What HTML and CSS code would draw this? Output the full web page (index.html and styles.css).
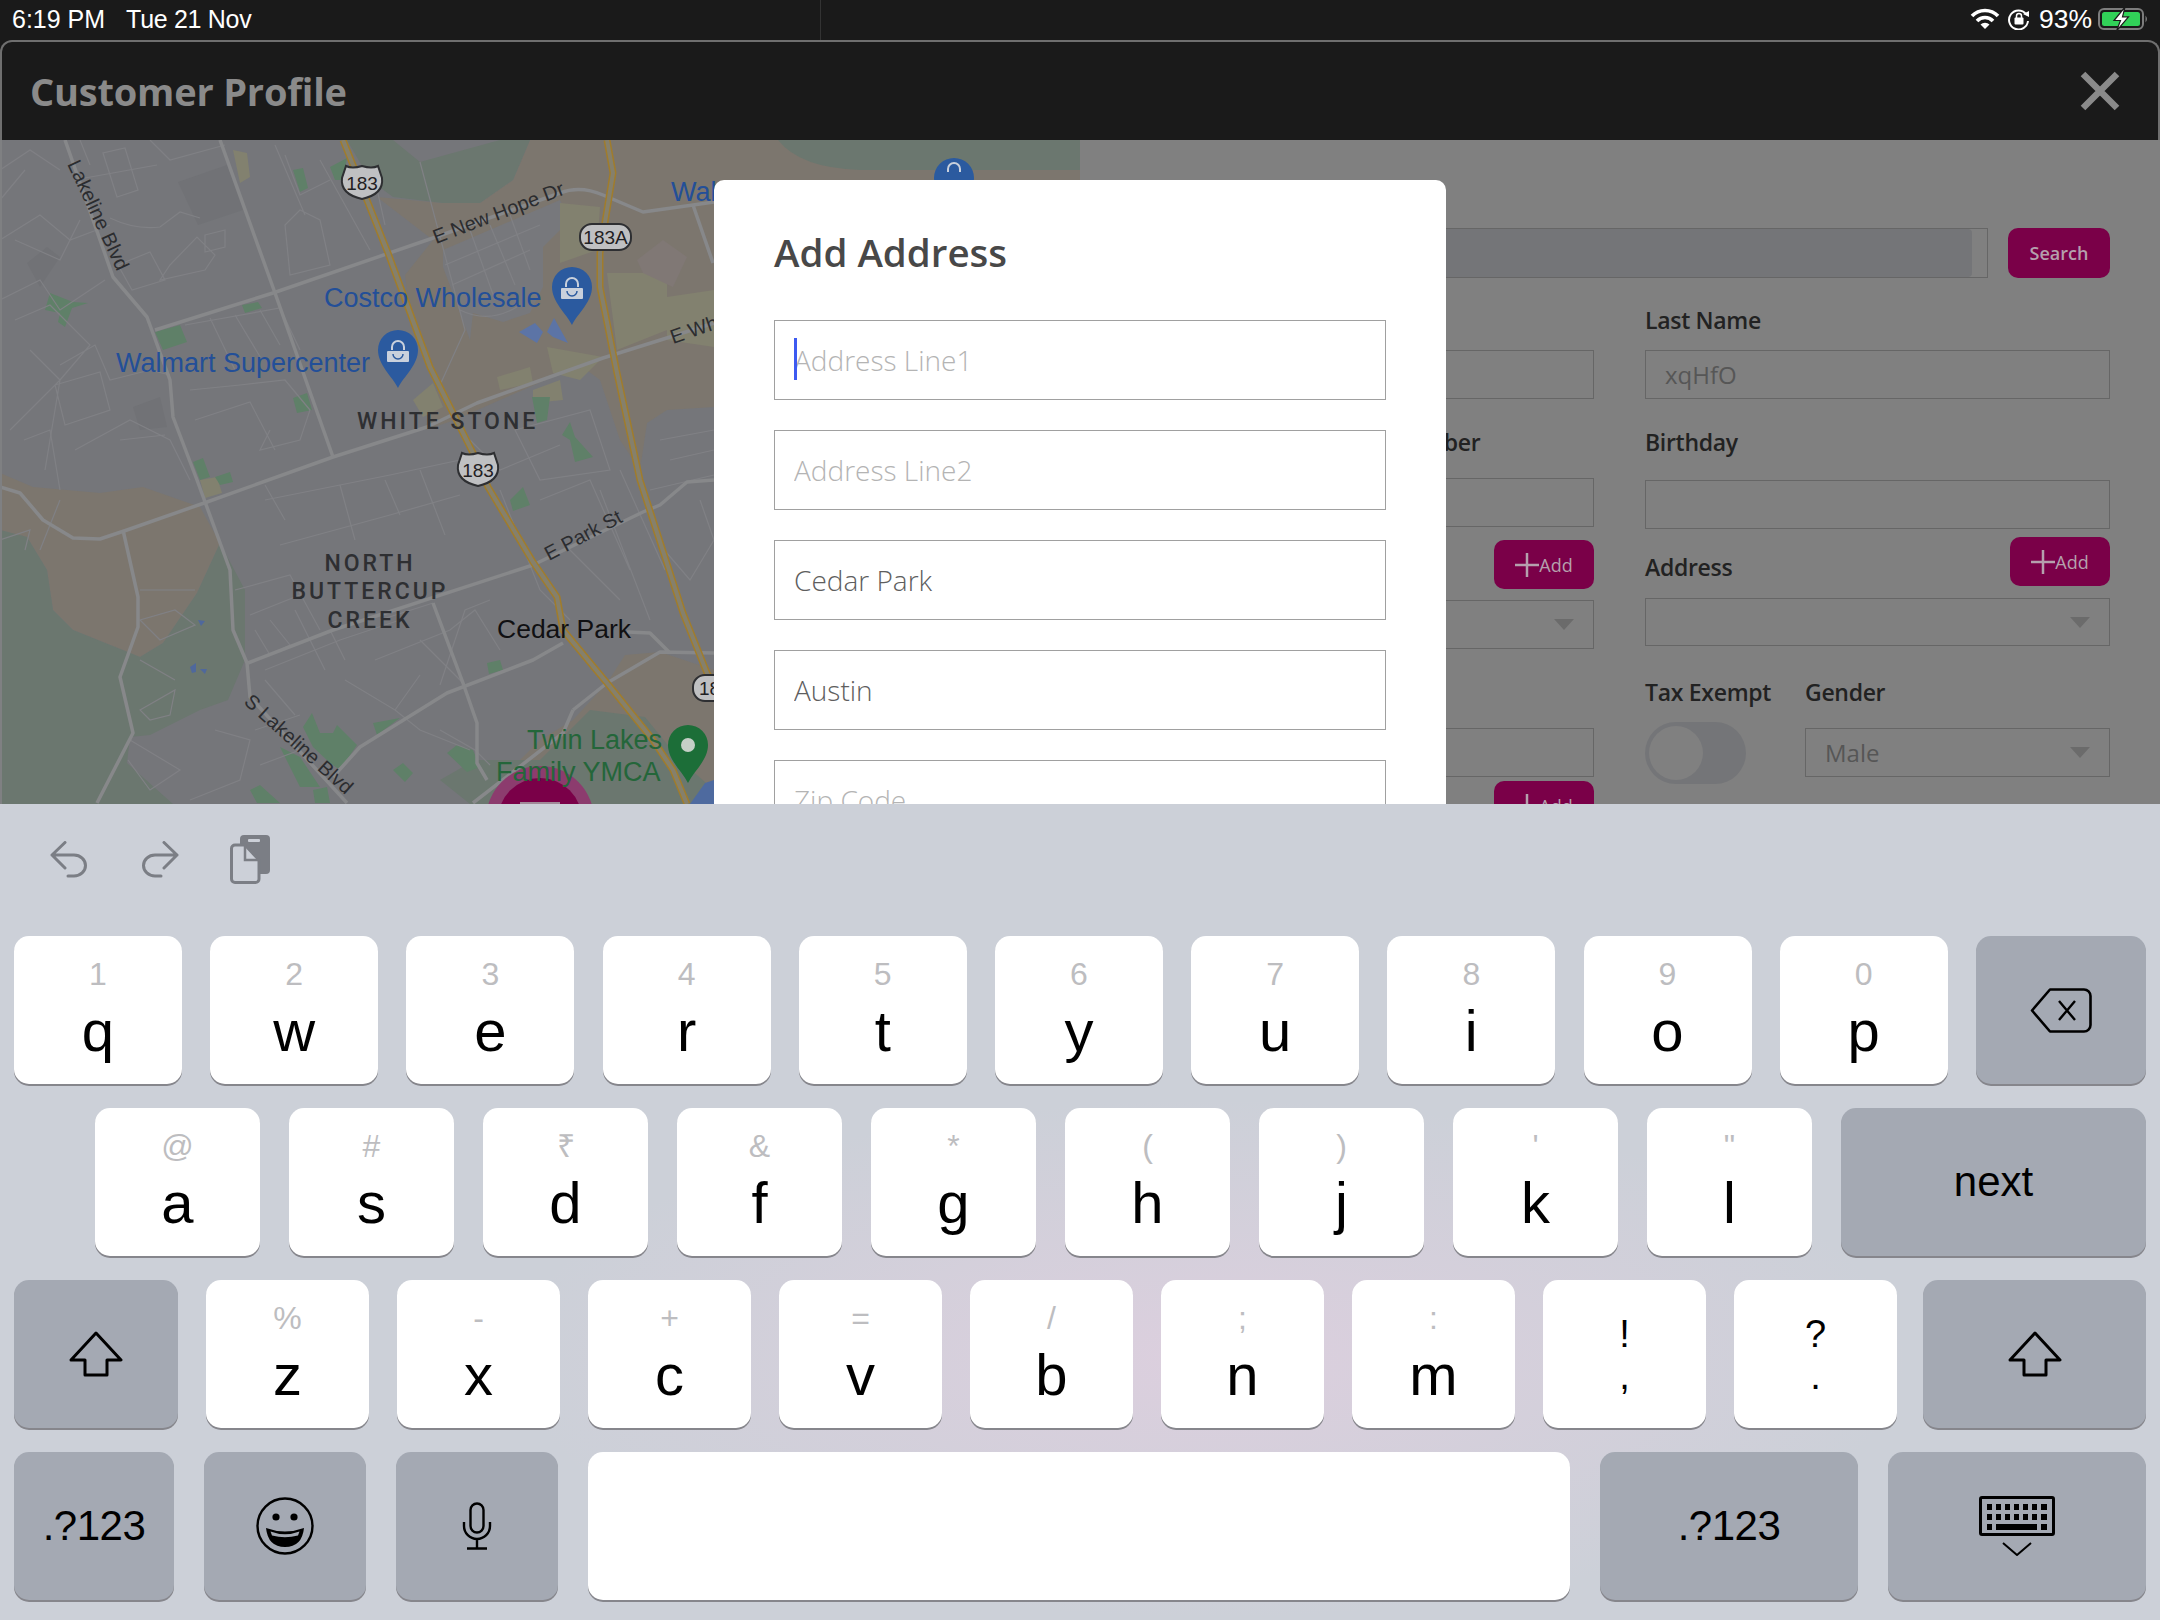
FILE: index.html
```html
<!DOCTYPE html>
<html lang="en">
<head>
    <meta charset="UTF-8">
    <title>Customer Profile</title>
    <link rel="stylesheet" href="styles.css">
</head>
<body>

    <!-- Status bar -->
    <div class="status-bar">
        <div class="status-left"><span>6:19 PM</span><span>Tue 21 Nov</span></div>
        <div class="status-divider"></div>
        <div class="status-right">
            <svg class="icon-wifi" viewBox="0 0 30 22"><path d="M2 8 A18 18 0 0 1 28 8" fill="none" stroke="#fff" stroke-width="3.600"/><path d="M7 13 A11 11 0 0 1 23 13" fill="none" stroke="#fff" stroke-width="3.600"/><path d="M15 21 L10.500 16.500 A6.500 6.500 0 0 1 19.500 16.500 Z" fill="#fff"/></svg>
            <svg class="icon-lock" viewBox="0 0 22 22"><path d="M18 6 A9.500 9.500 0 1 0 20 13" fill="none" stroke="#fff" stroke-width="2"/><path d="M15 6 L21 3 L21 9 Z" fill="#fff"/><rect x="6.500" y="9.500" width="9" height="7" rx="1" fill="#fff"/><path d="M8.500 10 V8 A2.500 2.500 0 0 1 13.500 8 V10" fill="none" stroke="#fff" stroke-width="1.500"/></svg>
            <span class="battery-text">93%</span>
            <svg class="icon-battery" viewBox="0 0 52 24"><rect x="1" y="2" width="44" height="20" rx="5" fill="none" stroke="#7d7d7d" stroke-width="2"/><rect x="4" y="5" width="38" height="14" rx="2.500" fill="#31d158"/><path d="M47.500 8.500 Q50.500 12 47.500 15.500 Z" fill="#7d7d7d"/><path d="M27 0 L16 13.500 H22.500 L18.500 24 L30.500 9.800 H24.500 Z" fill="#fff" stroke="#1a1a1a" stroke-width="1.200"/></svg>
        </div>
    </div>

    <!-- App area above the keyboard -->
    <div class="app">
        <div class="app-header">
            <h1>Customer Profile</h1>
            <svg class="icon-close" viewBox="0 0 40 40"><path d="M3 3 L37 37 M37 3 L3 37" stroke="#8a8a8a" stroke-width="6.500" fill="none"/></svg>
        </div>

        <div class="app-body">
            <!-- Map -->
            <div class="map">
                <svg class="map-svg" viewBox="0 0 1080 664">
                    <rect width="1080" height="664" fill="#75767a"/>

                    <!-- land areas -->
                    <path class="land-tan" d="M377 57 L443 63 L480 63 L513 40 L530 0 H1080 V60 H714 V267 L667 270 L647 283 L640 330 L620 300 L600 240 L580 225 L500 260 L455 280 L425 290 L440 240 L410 175 L405 135 L433 100 Z"/>
                    <path class="land-green" d="M347 0 H530 L513 40 L480 63 L443 63 L393 57 L370 40 Z"/>
                    <path d="M393 0 L420 22 L500 0 Z" fill="#75767a"/>
                    <path class="land-green" d="M778 0 H1080 V30 H860 Q800 28 778 0 Z"/>
                    <path d="M443 110 L560 60 L570 80 L543 107 L543 147 L530 173 L503 182 L473 173 L470 200 L443 127 Z" fill="#77787c"/>
                    <path class="land-yellow" d="M560 63 L600 67 L597 110 L560 123 Z M607 133 L667 133 L667 190 L617 210 Z M667 157 L714 150 V207 L667 200 Z M547 207 L603 217 L580 240 L553 233 Z M497 237 L530 227 L533 243 L500 250 Z M533 250 L560 240 L563 260 L533 263 Z M413 260 L433 243 L443 267 L423 277 Z M233 10 L247 13 L250 37 L240 43 Z M200 340 L217 337 L222 353 L205 358 Z"/>
                    <path d="M637 120 L663 100 L687 117 L673 147 L643 133 Z" fill="#807875"/>
                    <path class="land-tan" d="M0 333 L33 347 L100 353 L143 347 L200 367 L220 403 L197 453 L163 503 L140 517 L73 490 L53 470 L47 430 L27 397 L0 390 Z"/>
                    <path class="land-green" d="M0 390 L27 397 L47 430 L53 470 L73 490 L140 517 L163 503 L197 453 L220 403 L245 450 L245 520 L228 560 L200 570 L150 595 L130 597 L127 623 L173 664 H0 Z"/>
                    <path class="land-tan" d="M573 580 L607 543 L625 515 L660 512 L714 530 V664 H560 L520 620 L540 600 Z"/>
                    <path class="land-green" d="M590 570 L645 577 L680 620 L714 650 V664 H470 L440 640 L475 620 L540 620 Z"/>
                    <path d="M705 643 L714 640 V664 H690 Z" fill="#4e6a9f"/>

                    <!-- darker blocks -->
                    <path d="M178 42 L227 25 L243 70 L198 85 Z M27 123 L47 107 L60 117 L40 147 Z M133 267 L160 257 L167 287 L140 290 Z" fill="#717276"/>

                    <!-- parks -->
                    <path class="land-park" d="M45 170 L50 153 L73 162 L88 163 L72 168 L65 187 L58 182 L60 173 Z"/>
                    <path class="land-park" d="M155 192 L180 185 L187 202 L163 210 Z M242 165 L258 162 L262 168 L245 173 Z M293 30 L303 28 L308 48 L300 52 Z M330 27 L347 18 L343 40 L335 40 Z"/>
                    <path class="land-park" d="M293 258 L307 253 L312 270 L297 273 Z M193 322 L203 318 L210 337 L200 340 Z M215 337 L230 332 L233 342 L220 345 Z"/>
                    <path class="land-park" d="M532 257 L550 257 L547 280 L537 283 Z M570 282 L575 297 L593 317 L575 322 L570 300 L562 295 Z M523 347 L530 365 L513 371 L510 360 Z M487 523 L500 520 L503 530 L489 534 Z"/>
                    <path class="land-park" d="M447 613 L457 605 L473 610 L480 627 L467 632 Z M393 630 L403 623 L413 633 L405 642 Z M373 583 L400 578 L377 595 Z"/>
                    <path class="land-park" d="M303 587 L312 573 L320 593 L333 593 L337 585 L357 605 L340 630 L330 623 L313 607 Z M280 607 L300 617 L320 647 L300 647 Z M250 650 L260 645 L280 663 L257 663 Z M313 650 L327 647 L330 663 L315 663 Z"/>

                    <!-- minor streets -->
                    <path class="street" d="M103 13 L117 57 L138 50 L125 8 Z M85 38 L157 25 M0 30 L30 10 L60 30 M110 78 Q135 90 160 87 L180 72 L200 78 M170 125 L197 97 L215 115 L205 130 L160 140 Z M205 95 L225 90 L225 107 L205 112 Z M118 125 L150 112 L165 140 L132 150 Z"/>
                    <path class="street" d="M0 100 L40 75 L70 100 L110 85 M0 160 L40 140 L60 170 L105 140 M15 180 L50 165 L90 205 L60 240 L30 210 M60 225 L95 205 L110 240 L150 230 L170 235 M55 245 L100 232 L110 270 L65 285 Z M10 290 L60 240 L45 330 M75 310 L130 280 L170 300 L190 340 M120 300 L165 295"/>
                    <path class="street" d="M185 185 L280 168 L300 210 M210 178 L235 230 M235 175 L262 220 M260 170 L280 205 M190 250 L240 245 L285 240 L310 270 L300 300 L260 310 L270 290 M195 280 L250 262 L275 310 M285 85 L300 70 L320 80 L330 125 L290 135 Z M285 15 L300 55 L330 40 M275 5 L305 75 M320 20 L370 110 M345 50 L375 40 L385 85"/>
                    <path class="street" d="M445 125 L540 85 M452 145 L530 110 M470 90 L495 160 M490 85 L515 145 M510 75 L530 130 M460 170 Q490 185 520 165 M420 22 L465 190 L440 245 M80 0 L90 25 M150 0 L170 20 L225 5"/>
                    <path class="street" d="M265 360 L390 335 L460 320 M280 405 L390 375 L460 355 M265 345 L285 380 M340 345 L355 400 M385 340 L400 375 M420 330 L445 395 M460 320 L470 340"/>
                    <path class="street" d="M235 450 L290 435 L320 490 M250 475 L300 455 M255 490 L270 515 L290 505 L270 480 M295 470 L325 530 M330 490 L345 520 M380 480 L433 463 M375 520 L450 490 L475 470 L500 510"/>
                    <path class="street" d="M265 530 L340 500 L400 480 M265 540 L295 575 M345 540 L395 570 L420 535 M395 570 L420 590 L470 610 M420 500 L465 545 M440 545 L465 470 L490 460"/>
                    <path class="street" d="M130 600 L180 630 L150 650 L128 620 M175 540 L140 520 M140 570 L175 550 L170 575 L150 580 Z M215 590 L250 600 L240 640 L190 660 M255 590 L300 575 M260 625 L300 610 M440 590 L475 610 L490 625"/>
                    <path class="street" d="M540 360 L590 340 L630 430 M560 400 L620 460 M500 350 L540 450 L570 480 M600 350 L650 480 M620 330 L665 430 M700 360 L714 400 L690 440 L660 405 M660 300 L714 290 M670 320 L714 310 M650 350 L714 335"/>
                    <path class="street" d="M515 290 L590 270 L610 330 L540 340 Z M470 300 L500 330 L560 305 M25 30 L0 60 M15 100 L60 120 L80 80"/>
                    <path class="street" d="M24 300 L50 290 L60 350 M0 400 L30 390 L25 410 M60 360 L40 410 M160 500 L195 485 L175 470 L140 480 Z M140 450 L195 450"/>

                    <!-- main roads -->
                    <g class="road">
                        <path d="M65 0 L113 137 L147 177 L170 240 L173 277 L197 340 L230 430 L233 490 L247 523 L250 557 L347 663"/>
                        <path d="M155 190 L273 153 L433 98 L560 53 Q580 45 603 55 L643 72 L693 65 L714 62 M693 65 L713 123"/>
                        <path d="M220 0 L275 153 L333 317"/>
                        <path d="M0 347 L20 353 L43 380 L73 398 L100 399 L127 390 L207 362 L333 317 L427 287 L477 263 L603 218 L670 197 L714 183"/>
                        <path d="M123 390 L138 457 L138 487 L120 537 L133 593 L97 663"/>
                        <path d="M248 523 L333 490 L533 425 L643 372 L660 365 L687 342 L714 340"/>
                        <path d="M333 637 L360 607 L447 553 L533 520 L563 503 M573 570 L607 543 L660 512 L714 513 M627 492 L650 493 L670 513"/>
                        <path d="M433 463 L463 543 L477 583 L477 623 L487 640"/>
                        <path d="M573 570 L563 593 L473 663"/>
                    </g>

                    <!-- highways -->
                    <g class="highway-edge">
                        <path d="M343 0 L388 113 L430 227 L473 313 L488 347 L533 422 L557 457 L563 490 L607 543 L653 600 L673 630 L687 664"/>
                        <path d="M607 0 L613 33 L600 113 L600 147 L617 233 L640 340 L683 473 L707 533 L714 545"/>
                    </g>
                    <g class="highway-fill">
                        <path d="M343 0 L388 113 L430 227 L473 313 L488 347 L533 422 L557 457 L563 490 L607 543 L653 600 L673 630 L687 664"/>
                        <path d="M607 0 L613 33 L600 113 L600 147 L617 233 L640 340 L683 473 L707 533 L714 545"/>
                    </g>

                    <!-- small water shapes -->
                    <path d="M519 192 L535 183 L543 192 L537 203 Z M547 192 L554 178 L568 203 L553 197 Z" fill="#5c74a6"/>
                    <path d="M198 480 L205 481 L201 486 Z M190 527 L196 523 L196 532 L192 533 Z M200 529 L207 529 L205 534 Z" fill="#4f689c"/>

                    <!-- shields -->
                    <g class="shield">
                        <path d="M346 26 Q352 29 362 26 Q372 29 378 26 L382 38 Q384 54 362 59 Q340 54 342 38 Z"/>
                        <text x="362" y="50" text-anchor="middle">183</text>
                        <path d="M462 313 Q468 316 478 313 Q488 316 494 313 L498 325 Q500 341 478 346 Q456 341 458 325 Z"/>
                        <text x="478" y="337" text-anchor="middle">183</text>
                        <rect x="580" y="84" width="51" height="26" rx="12"/>
                        <text x="605.500" y="104" text-anchor="middle">183A</text>
                        <rect x="693" y="535" width="52" height="26" rx="12"/>
                        <text x="699" y="555">183</text>
                    </g>

                    <!-- pins -->
                    <g class="pin">
                        <path d="M572 127 A20 20 0 0 1 592 147 C592 162 578 173 572 185 C566 173 552 162 552 147 A20 20 0 0 1 572 127 Z"/>
                        <rect class="pin-bag" x="561" y="148" width="22" height="11" rx="1"/>
                        <path class="pin-line" d="M566 147 V144 A6 6 0 0 1 578 144 V147"/>
                        <path class="pin-smile" d="M567 151 A5 5 0 0 0 577 151"/>
                        <path d="M398 190 A20 20 0 0 1 418 210 C418 225 404 236 398 248 C392 236 378 225 378 210 A20 20 0 0 1 398 190 Z"/>
                        <rect class="pin-bag" x="387" y="211" width="22" height="11" rx="1"/>
                        <path class="pin-line" d="M392 210 V207 A6 6 0 0 1 404 207 V210"/>
                        <path class="pin-smile" d="M393 214 A5 5 0 0 0 403 214"/>
                        <path d="M954 18 A20 20 0 0 1 974 38 C974 53 960 64 954 76 C948 64 934 53 934 38 A20 20 0 0 1 954 18 Z"/>
                        <path class="pin-line" d="M948 32 V29 A6 6 0 0 1 960 29 V32"/>
                        <path class="pin-green" d="M688 585 A20 20 0 0 1 708 605 C708 620 694 631 688 643 C682 631 668 620 668 605 A20 20 0 0 1 688 585 Z"/>
                        <circle cx="688" cy="605" r="7" fill="#c5cfc7"/>
                    </g>

                    <!-- round action button -->
                    <circle cx="540" cy="680" r="54" fill="#8c3c6e"/>
                    <circle cx="540" cy="680" r="42" fill="#7a0048"/>
                    <rect x="520" y="662" width="40" height="5" fill="#a08a98"/>

                    <!-- labels -->
                    <text class="map-road" transform="translate(67 24) rotate(65)">Lakeline Blvd</text>
                    <text class="map-road" transform="translate(436 104) rotate(-21)">E New Hope Dr</text>
                    <text class="map-road" transform="translate(549 421) rotate(-28)">E Park St</text>
                    <text class="map-road" transform="translate(673 204) rotate(-19)">E Wh</text>
                    <text class="map-road" transform="translate(243 563) rotate(42)">S Lakeline Blvd</text>
                    <text class="map-poi" x="671" y="61">Wal</text>
                    <text class="map-poi" x="324" y="167">Costco Wholesale</text>
                    <text class="map-poi" x="116" y="232">Walmart Supercenter</text>
                    <text class="map-area" x="357" y="289">WHITE STONE</text>
                    <text class="map-area" x="370" y="431" text-anchor="middle">NORTH</text>
                    <text class="map-area" x="370" y="459" text-anchor="middle">BUTTERCUP</text>
                    <text class="map-area" x="370" y="488" text-anchor="middle">CREEK</text>
                    <text class="map-city" x="497" y="498">Cedar Park</text>
                    <text class="map-green" x="527" y="609">Twin Lakes</text>
                    <text class="map-green" x="496" y="641">Family YMCA</text>

                    <rect width="2" height="664" fill="#7f8082"/>
                </svg>
            </div>

            <!-- Profile form, dimmed by the modal -->
            <div class="panel">
                <div class="search-row">
                    <div class="search-input"><div class="search-fill"></div></div>
                    <button class="btn-search">Search</button>
                </div>
                <div class="form-columns">
                    <div class="form-col">
                        <label class="field-label">First Name</label>
                        <div class="field-box box-first"></div>
                        <label class="field-label label-number">Number</label>
                        <div class="field-box box-number"></div>
                        <div class="add-row add-row-left"><button class="btn-add"><svg viewBox="0 0 24 24"><path d="M12 0 V24 M0 12 H24" stroke="#b5a0ad" stroke-width="2.500"/></svg>Add</button></div>
                        <div class="field-box select-left"><span class="caret"></span></div>
                        <div class="field-box box-bottom"></div>
                        <div class="add-row add-row-bottom"><button class="btn-add"><svg viewBox="0 0 24 24"><path d="M12 0 V24 M0 12 H24" stroke="#b5a0ad" stroke-width="2.500"/></svg>Add</button></div>
                    </div>
                    <div class="form-col">
                        <label class="field-label">Last Name</label>
                        <div class="field-box box-first">xqHfO</div>
                        <label class="field-label">Birthday</label>
                        <div class="field-box box-birthday"></div>
                        <div class="add-row add-row-right">
                            <label class="field-label label-address">Address</label>
                            <button class="btn-add"><svg viewBox="0 0 24 24"><path d="M12 0 V24 M0 12 H24" stroke="#b5a0ad" stroke-width="2.500"/></svg>Add</button>
                        </div>
                        <div class="field-box select-right"><span class="caret"></span></div>
                        <div class="tax-row">
                            <div class="tax-col">
                                <label class="field-label">Tax Exempt</label>
                                <div class="toggle"><div class="toggle-knob"></div></div>
                            </div>
                            <div class="gender-col">
                                <label class="field-label">Gender</label>
                                <div class="field-box select-gender">Male<span class="caret"></span></div>
                            </div>
                        </div>
                    </div>
                </div>
            </div>
        </div>

        <!-- Add Address modal -->
        <div class="modal">
            <h2>Add Address</h2>
            <div class="modal-field">
                <span class="text-cursor"></span>
                <input type="text" placeholder="Address Line1">
            </div>
            <div class="modal-field"><input type="text" placeholder="Address Line2"></div>
            <div class="modal-field"><input type="text" value="Cedar Park"></div>
            <div class="modal-field"><input type="text" value="Austin"></div>
            <div class="modal-field"><input type="text" placeholder="Zip Code"></div>
        </div>
    </div>

    <!-- On-screen keyboard -->
    <div class="keyboard">
        <div class="kb-tools">
            <svg class="tool-undo" viewBox="0 0 38 37"><path d="M15 1.500 L2 14 L15 27 M2 14 H24 A11.500 10.500 0 0 1 24 35 H18" fill="none" stroke="#7b7e85" stroke-width="3" stroke-linecap="round" stroke-linejoin="round"/></svg>
            <svg class="tool-redo" viewBox="0 0 38 37"><path d="M23 1.500 L36 14 L23 27 M36 14 H14 A11.500 10.500 0 0 0 14 35 H20" fill="none" stroke="#7b7e85" stroke-width="3" stroke-linecap="round" stroke-linejoin="round"/></svg>
            <svg class="tool-paste" viewBox="0 0 41 50"><rect x="10" y="1" width="30" height="39" rx="4" fill="#7b7e85"/><rect x="18" y="5" width="12" height="3" rx="1" fill="#ccd0d8"/><path d="M5 11 H15 L29 26 V45 A3.500 3.500 0 0 1 25.500 48.500 H5 A3.500 3.500 0 0 1 1.500 45 V14.500 A3.500 3.500 0 0 1 5 11 Z" fill="#ccd0d8" stroke="#7b7e85" stroke-width="3"/><path d="M15 11 V26 H29" fill="none" stroke="#7b7e85" stroke-width="2.500"/></svg>
        </div>

        <div class="kb-row row-one">
            <div class="key"><span class="hint">1</span><span class="letter">q</span></div>
            <div class="key"><span class="hint">2</span><span class="letter">w</span></div>
            <div class="key"><span class="hint">3</span><span class="letter">e</span></div>
            <div class="key"><span class="hint">4</span><span class="letter">r</span></div>
            <div class="key"><span class="hint">5</span><span class="letter">t</span></div>
            <div class="key"><span class="hint">6</span><span class="letter">y</span></div>
            <div class="key"><span class="hint">7</span><span class="letter">u</span></div>
            <div class="key"><span class="hint">8</span><span class="letter">i</span></div>
            <div class="key"><span class="hint">9</span><span class="letter">o</span></div>
            <div class="key"><span class="hint">0</span><span class="letter">p</span></div>
            <div class="key key-dark key-grow">
                <svg class="icon-backspace" viewBox="0 0 62 45"><path d="M20 1.500 H54 A6.500 6.500 0 0 1 60.500 8 V37 A6.500 6.500 0 0 1 54 43.500 H20 L2 22.500 Z" fill="none" stroke="#000" stroke-width="2.600" stroke-linejoin="round"/><path d="M29 13 L45 32 M45 13 L29 32" stroke="#000" stroke-width="2.400"/></svg>
            </div>
        </div>

        <div class="kb-row row-two">
            <div class="key"><span class="hint">@</span><span class="letter">a</span></div>
            <div class="key"><span class="hint">#</span><span class="letter">s</span></div>
            <div class="key"><span class="hint">₹</span><span class="letter">d</span></div>
            <div class="key"><span class="hint">&amp;</span><span class="letter">f</span></div>
            <div class="key"><span class="hint">*</span><span class="letter">g</span></div>
            <div class="key"><span class="hint">(</span><span class="letter">h</span></div>
            <div class="key"><span class="hint">)</span><span class="letter">j</span></div>
            <div class="key"><span class="hint">'</span><span class="letter">k</span></div>
            <div class="key"><span class="hint">"</span><span class="letter">l</span></div>
            <div class="key key-dark key-grow"><span class="key-word">next</span></div>
        </div>

        <div class="kb-row row-three">
            <div class="key key-dark key-shift">
                <svg class="icon-shift" viewBox="0 0 54 46"><path d="M27 2 L52 29 H38 V44 H16 V29 H2 Z" fill="none" stroke="#000" stroke-width="3" stroke-linejoin="round"/></svg>
            </div>
            <div class="key"><span class="hint">%</span><span class="letter">z</span></div>
            <div class="key"><span class="hint">-</span><span class="letter">x</span></div>
            <div class="key"><span class="hint">+</span><span class="letter">c</span></div>
            <div class="key"><span class="hint">=</span><span class="letter">v</span></div>
            <div class="key"><span class="hint">/</span><span class="letter">b</span></div>
            <div class="key"><span class="hint">;</span><span class="letter">n</span></div>
            <div class="key"><span class="hint">:</span><span class="letter">m</span></div>
            <div class="key key-stack"><span>!</span><span>,</span></div>
            <div class="key key-stack"><span>?</span><span>.</span></div>
            <div class="key key-dark key-grow key-shift-right">
                <svg class="icon-shift" viewBox="0 0 54 46"><path d="M27 2 L52 29 H38 V44 H16 V29 H2 Z" fill="none" stroke="#000" stroke-width="3" stroke-linejoin="round"/></svg>
            </div>
        </div>

        <div class="kb-row row-four">
            <div class="key key-dark key-num-left"><span class="key-num">.?123</span></div>
            <div class="key key-dark key-small">
                <svg class="icon-emoji" viewBox="0 0 58 58"><circle cx="29" cy="29" r="27.500" fill="none" stroke="#000" stroke-width="2.400"/><circle cx="20" cy="20" r="3.600"/><circle cx="38" cy="20" r="3.600"/><path d="M10 31 Q29 38 48 31 Q46 50 29 50 Q12 50 10 31 Z M14.500 34.500 Q29 40 43.500 34.500 L42 38.500 Q29 42 16 38.500 Z" fill-rule="evenodd"/></svg>
            </div>
            <div class="key key-dark key-small">
                <svg class="icon-mic" viewBox="0 0 30 48"><rect x="8.500" y="1.500" width="13" height="29" rx="6.500" fill="none" stroke="#000" stroke-width="2.400"/><path d="M2 20 V24 A13 13 0 0 0 28 24 V20 M15 37 V46 M5 46.500 H25" fill="none" stroke="#000" stroke-width="2.400"/></svg>
            </div>
            <div class="key key-space"></div>
            <div class="key key-dark key-wide"><span class="key-num">.?123</span></div>
            <div class="key key-dark key-wide">
                <svg class="icon-dismiss" viewBox="0 0 76 60"><rect x="1.500" y="1.500" width="73" height="37" rx="1.500" fill="none" stroke="#000" stroke-width="3"/><path d="M8 8 h5 v6 h-5z M17 8 h5 v6 h-5z M26 8 h5 v6 h-5z M35 8 h5 v6 h-5z M44 8 h5 v6 h-5z M53 8 h5 v6 h-5z M62 8 h6 v6 h-6z M8 18 h5 v6 h-5z M17 18 h5 v6 h-5z M26 18 h5 v6 h-5z M35 18 h5 v6 h-5z M44 18 h5 v6 h-5z M53 18 h5 v6 h-5z M62 18 h6 v6 h-6z M8 28 h5 v6 h-5z M17 28 h41 v6 h-41z M62 28 h6 v6 h-6z"/><path d="M24 47 L38 59 L52 47" fill="none" stroke="#000" stroke-width="2"/></svg>
            </div>
        </div>
    </div>

</body>
</html>
```

FILE: styles.css
```css
/* Basic Reset */
* {
    margin: 0;
    padding: 0;
    box-sizing: border-box;
}

body {
    width: 2160px;
    height: 1620px;
    overflow: hidden;
    background-color: #1a1a1a;
    font-family: 'Open Sans', sans-serif;
}

/* Status bar */
.status-bar {
    height: 40px;
    background-color: #1a1a1a;
    color: #fff;
    font-family: 'Liberation Sans', sans-serif;
    font-size: 25px;
    display: flex;
    align-items: center;
    justify-content: space-between;
    position: relative;
    padding: 0 10px 2px 12px;
}

.status-left span + span {
    margin-left: 21px;
    letter-spacing: -0.3px;
}

.status-divider {
    position: absolute;
    left: 820px;
    top: 0;
    width: 1px;
    height: 40px;
    background-color: #333;
}

.status-right {
    display: flex;
    align-items: center;
}

.icon-wifi {
    width: 30px;
    height: 22px;
}

.icon-lock {
    width: 22px;
    height: 22px;
    margin-left: 8px;
}

.battery-text {
    margin-left: 9px;
    font-size: 26.500px;
}

.icon-battery {
    width: 52px;
    height: 24px;
    margin-left: 6px;
}

/* App */
.app {
    height: 764px;
    position: relative;
    overflow: hidden;
}

.app-header {
    height: 100px;
    background-color: #1a1a1a;
    border: 2px solid #6f6f6f;
    border-bottom: none;
    border-radius: 12px 12px 0 0;
    display: flex;
    align-items: center;
    justify-content: space-between;
    padding: 0 38px 0 28px;
}

.app-header h1 {
    font-size: 38px;
    font-weight: 700;
    color: #8a8a8a;
    letter-spacing: -0.2px;
}

.icon-close {
    width: 40px;
    height: 40px;
}

.app-body {
    display: flex;
    height: 664px;
}

/* Map */
.map {
    width: 1080px;
    flex-shrink: 0;
}

.map-svg {
    display: block;
    width: 1080px;
    height: 664px;
    font-family: 'Liberation Sans', sans-serif;
}

.land-tan {
    fill: #7c766e;
}

.land-green {
    fill: #6b776f;
}

.land-yellow {
    fill: #82816f;
}

.land-park {
    fill: #5f8068;
}

.street {
    fill: none;
    stroke: #808185;
    stroke-width: 1.200px;
}

.road {
    fill: none;
    stroke: #87888a;
    stroke-width: 3.500px;
    stroke-linejoin: round;
}

.highway-edge {
    fill: none;
    stroke: #a07c2c;
    stroke-width: 7px;
    stroke-linejoin: round;
}

.highway-fill {
    fill: none;
    stroke: #85806c;
    stroke-width: 4px;
    stroke-linejoin: round;
}

.shield path,
.shield rect {
    fill: #bfc0c2;
    stroke: #2e2f32;
    stroke-width: 2px;
}

.shield text {
    font-size: 19px;
    fill: #1f2023;
}

.pin path {
    fill: #2b5a9f;
}

.pin .pin-green {
    fill: #1c6e38;
}

.pin .pin-bag {
    fill: #c9d0dc;
}

.pin .pin-line {
    fill: none;
    stroke: #c9d0dc;
    stroke-width: 2px;
}

.pin .pin-smile {
    fill: none;
    stroke: #2b5a9f;
    stroke-width: 1.500px;
}

.map-road {
    font-size: 20px;
    fill: #2b2c2f;
}

.map-poi {
    font-size: 27px;
    fill: #234f98;
}

.map-area {
    font-family: Roboto, sans-serif;
    font-size: 23px;
    font-weight: 500;
    letter-spacing: 3px;
    fill: #2e2f32;
}

.map-city {
    font-size: 26.500px;
    fill: #101012;
}

.map-green {
    font-size: 27px;
    fill: #24663a;
}

/* Profile form */
.panel {
    flex: 1;
    background-color: #808080;
    padding: 88px 50px 0 49px;
}

.search-row {
    display: flex;
    gap: 20px;
}

.search-input {
    flex: 1;
    height: 50px;
    border: 1px solid #666;
    background-color: #808080;
    padding-right: 15px;
}

.search-fill {
    height: 100%;
    background-color: #747578;
    border-radius: 0 4px 4px 0;
}

.btn-search {
    width: 102px;
    height: 50px;
    background-color: #7a0048;
    color: #b5a0ad;
    border: none;
    border-radius: 10px;
    font-family: inherit;
    font-size: 18px;
    font-weight: 600;
}

.form-columns {
    display: flex;
    gap: 51px;
    margin-top: 27px;
}

.form-col {
    width: 465px;
    flex-shrink: 0;
}

.field-label {
    display: block;
    height: 30px;
    line-height: 30px;
    font-size: 23px;
    font-weight: 600;
    color: #222;
    letter-spacing: -0.3px;
}

.label-number {
    margin-top: 28px;
    padding-left: 261px;
}

.form-col > .field-label:nth-of-type(2) {
    margin-top: 28px;
}

.field-box {
    border: 1px solid #666;
    padding-left: 19px;
    font-size: 24px;
    color: #565656;
    display: flex;
    align-items: center;
    position: relative;
}

.box-first {
    height: 49px;
    margin-top: 15px;
}

.box-number {
    height: 49px;
    margin-top: 21px;
}

.box-birthday {
    height: 49px;
    margin-top: 23px;
}

.box-bottom {
    height: 49px;
    margin-top: 79px;
}

.select-left {
    height: 49px;
    margin-top: 11px;
}

.select-right {
    height: 48px;
    margin-top: 12px;
}

.select-gender {
    height: 49px;
    margin-top: 21px;
}

.caret {
    position: absolute;
    right: 19px;
    top: 18px;
    border-left: 10px solid transparent;
    border-right: 10px solid transparent;
    border-top: 11px solid #6b6b6b;
}

.add-row {
    display: flex;
    justify-content: flex-end;
}

.add-row-left {
    margin-top: 13px;
}

.add-row-right {
    justify-content: space-between;
    margin-top: 8px;
}

.add-row-bottom {
    margin-top: 4px;
}

.label-address {
    margin-top: 15px;
}

.btn-add {
    width: 100px;
    height: 49px;
    background-color: #7a0048;
    color: #b5a0ad;
    border: none;
    border-radius: 10px;
    font-family: inherit;
    font-size: 18px;
    display: flex;
    align-items: center;
    justify-content: center;
}

.btn-add svg {
    width: 24px;
    height: 24px;
}

.tax-row {
    display: flex;
    margin-top: 31px;
}

.tax-col {
    width: 160px;
}

.gender-col {
    flex: 1;
}

.toggle {
    width: 101px;
    height: 62px;
    margin-top: 15px;
    border-radius: 31px;
    background-color: #747578;
    padding: 4px;
}

.toggle-knob {
    width: 54px;
    height: 54px;
    border-radius: 50%;
    background-color: #808080;
}

/* Modal */
.modal {
    position: absolute;
    left: 714px;
    top: 140px;
    width: 732px;
    height: 700px;
    background-color: #fff;
    border-radius: 10px;
    padding: 0 60px;
}

.modal h2 {
    height: 140px;
    line-height: 144px;
    font-size: 38.500px;
    font-weight: 600;
    color: #484848;
}

.modal-field {
    position: relative;
    margin-bottom: 30px;
}

.modal-field input {
    display: block;
    width: 612px;
    height: 80px;
    border: 1px solid #a0a0a0;
    border-radius: 0;
    padding: 0 19px;
    font-family: 'Open Sans', sans-serif;
    font-size: 28px;
    font-weight: 300;
    color: #5e5e5e;
    outline: none;
}

.modal-field input::placeholder {
    color: #b4b4b4;
    opacity: 1;
}

.text-cursor {
    position: absolute;
    left: 20px;
    top: 18px;
    width: 3px;
    height: 42px;
    background-color: #3d5af1;
}

/* Keyboard */
.keyboard {
    height: 816px;
    background:
        radial-gradient(ellipse 700px 260px at 56% 68%, #dccfde 0, rgba(220, 207, 222, 0) 100%),
        #ccd0d8;
    font-family: 'Liberation Sans', sans-serif;
    color: #000;
}

.kb-tools {
    height: 132px;
    display: flex;
    align-items: flex-start;
    position: relative;
}

.tool-undo,
.tool-redo {
    width: 38px;
    height: 37px;
    margin-top: 37px;
}

.tool-undo {
    margin-left: 50px;
}

.tool-redo {
    margin-left: 53px;
}

.tool-paste {
    width: 41px;
    height: 50px;
    margin-top: 30px;
    margin-left: 51px;
}

.kb-row {
    display: flex;
    height: 148px;
    margin-bottom: 24px;
    padding-right: 14px;
}

.row-one {
    gap: 28.200px;
    padding-left: 14px;
}

.row-two {
    gap: 29px;
    padding-left: 95px;
}

.row-three {
    gap: 28px;
    padding-left: 14px;
}

.row-four {
    gap: 30px;
    padding-left: 14px;
}

.key {
    width: 168px;
    background-color: #fff;
    border-radius: 15px;
    box-shadow: 0 2px 0 #86868c;
    display: flex;
    flex-direction: column;
    align-items: center;
    justify-content: center;
    flex-shrink: 0;
}

.row-two .key {
    width: 165px;
}

.row-three .key {
    width: 163px;
}

.key-dark {
    background-color: #a4a9b3;
}

.row-one .key-grow,
.row-two .key-grow,
.row-three .key-grow {
    flex: 1;
    width: auto;
    flex-shrink: 1;
}

.row-three .key-shift {
    width: 164px;
}

.row-three .key-shift-right {
    margin-left: -2px;
}

.row-four .key-num-left {
    width: 160px;
}

.row-four .key-small {
    width: 162px;
}

.row-four .key-space {
    width: 982px;
}

.row-four .key-wide {
    width: 258px;
}

.hint {
    display: block;
    height: 38px;
    line-height: 38px;
    margin-top: 2px;
    font-size: 32px;
    color: #bdbdc0;
}

.letter {
    display: block;
    height: 72px;
    line-height: 72px;
    margin-top: 2px;
    font-size: 58px;
}

.key-stack {
    padding-top: 2px;
}

.key-stack span {
    display: block;
    font-size: 38px;
    line-height: 42px;
}

.key-word {
    font-size: 42px;
}

.key-num {
    font-size: 42px;
    letter-spacing: -0.5px;
}

.icon-backspace {
    width: 62px;
    height: 45px;
}

.icon-shift {
    width: 54px;
    height: 46px;
}

.icon-emoji {
    width: 58px;
    height: 58px;
}

.icon-mic {
    width: 30px;
    height: 48px;
}

.icon-dismiss {
    width: 76px;
    height: 60px;
}
```
